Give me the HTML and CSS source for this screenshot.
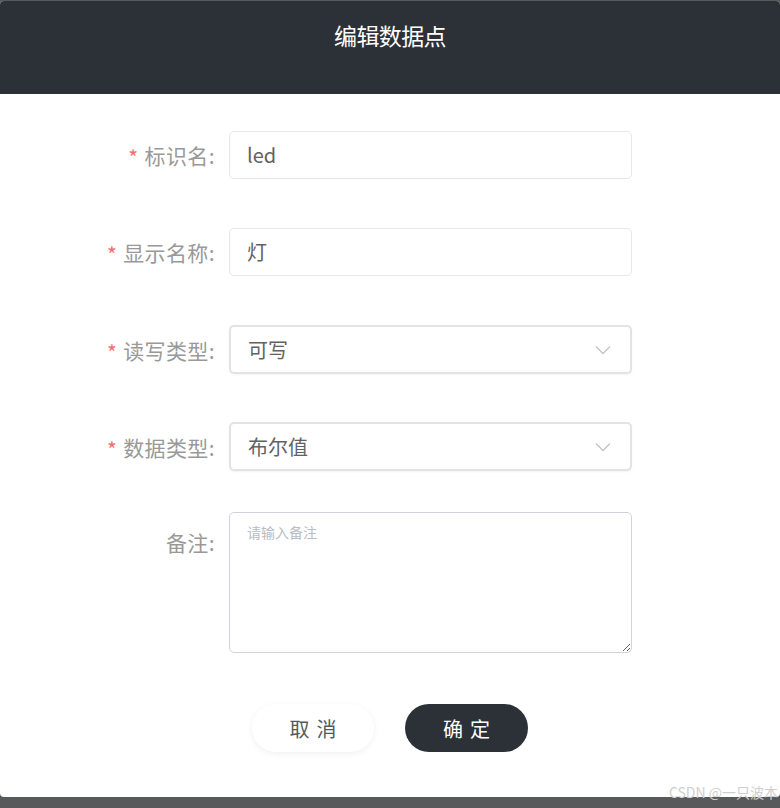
FILE: index.html
```html
<!DOCTYPE html>
<html lang="zh">
<head>
<meta charset="utf-8">
<title>编辑数据点</title>
<link rel="stylesheet" href="styles.css">
</head>
<body>
<div class="dialog">
  <div class="dialog-header">
    <h1 class="dialog-title">编辑数据点</h1>
  </div>
  <form class="form">
    <div class="form-row">
      <label class="form-label"><span class="req">*</span>标识名:</label>
      <div class="field input">led</div>
    </div>
    <div class="form-row">
      <label class="form-label"><span class="req">*</span>显示名称:</label>
      <div class="field input">灯</div>
    </div>
    <div class="form-row form-row-select">
      <label class="form-label"><span class="req">*</span>读写类型:</label>
      <div class="field select">可写
        <svg class="chev" width="16" height="10" viewBox="0 0 16 10"><path d="M1 1.5 L8 8.5 L15 1.5" fill="none" stroke="#c0c4cc" stroke-width="1.3"/></svg>
      </div>
    </div>
    <div class="form-row form-row-select">
      <label class="form-label"><span class="req">*</span>数据类型:</label>
      <div class="field select">布尔值
        <svg class="chev" width="16" height="10" viewBox="0 0 16 10"><path d="M1 1.5 L8 8.5 L15 1.5" fill="none" stroke="#c0c4cc" stroke-width="1.3"/></svg>
      </div>
    </div>
    <div class="form-row form-row-top">
      <label class="form-label label-top">备注:</label>
      <textarea class="field textarea" placeholder="请输入备注"></textarea>
    </div>
    <div class="actions">
      <button type="button" class="btn btn-cancel">取消</button>
      <button type="button" class="btn btn-ok">确定</button>
    </div>
  </form>
</div>
<div class="watermark">CSDN @一只波本</div>
</body>
</html>
```

FILE: styles.css
```css
html, body {
  margin: 0;
  padding: 0;
}
body {
  width: 780px;
  height: 808px;
  background: #58595b;
  font-family: "Noto Sans CJK SC", "Noto Sans", "Liberation Sans", sans-serif;
  overflow: hidden;
  position: relative;
}
.dialog {
  margin-top: 1px;
  height: 796px;
  background: #ffffff;
  border-radius: 4px;
  overflow: hidden;
}
.dialog-header {
  height: 93px;
  background: #2c3138;
  padding-top: 18px;
  box-sizing: border-box;
}
.dialog-title {
  margin: 0;
  text-align: center;
  color: #ffffff;
  font-size: 23px;
  line-height: 32px;
  font-weight: 400;
  letter-spacing: -0.6px;
}
.form {
  padding-top: 37px;
  display: flex;
  flex-direction: column;
}
.form-row {
  display: flex;
  align-items: center;
  margin-bottom: 49px;
}
.form-row-select {
  margin-bottom: 48px;
}
.form-row-top {
  align-items: flex-start;
  margin-top: -7px;
  margin-bottom: 51px;
}
.form-label {
  width: 217px;
  box-sizing: border-box;
  padding-right: 2px;
  text-align: right;
  font-size: 21px;
  line-height: 48px;
  color: #999999;
  letter-spacing: 0.4px;
}
.label-top {
  margin-top: 6px;
}
.req {
  color: #f56c6c;
  font-size: 21px;
  margin-right: 6px;
  position: relative;
  top: 2px;
}
.field {
  margin-left: 12px;
  width: 403px;
  box-sizing: border-box;
  border-radius: 5px;
  color: #606266;
  font-family: inherit;
}
.input {
  height: 48px;
  border: 1px solid #e4e7ed;
  padding-left: 17px;
  font-size: 20px;
  line-height: 46px;
}
.select {
  height: 49px;
  border: 2px solid #e3e3e3;
  padding-left: 17px;
  font-size: 20px;
  line-height: 45px;
  display: flex;
  align-items: center;
  justify-content: space-between;
  padding-right: 19px;
  box-shadow: 0 1px 2px rgba(0,0,0,0.05);
}
.chev {
  display: block;
}
.textarea {
  height: 141px;
  border: 1px solid #d0d3d9;
  padding: 9px 17px;
  font-size: 14px;
  line-height: 20px;
  resize: vertical;
  outline: none;
  display: block;
}
.textarea::placeholder {
  color: #b8bcc4;
}
.actions {
  display: flex;
  justify-content: center;
  gap: 31px;
}
.btn {
  width: 122px;
  height: 48px;
  border-radius: 24px;
  border: none;
  font-family: inherit;
  font-size: 20px;
  letter-spacing: 7px;
  text-indent: 7px;
  cursor: pointer;
}
.btn-cancel {
  background: #ffffff;
  color: #555a60;
  box-shadow: 0 2px 6px rgba(0,0,0,0.06);
}
.btn-ok {
  background: #2c3138;
  color: #ffffff;
  width: 123px;
}
.watermark {
  position: absolute;
  right: 2px;
  bottom: 8px;
  font-size: 14px;
  line-height: 16px;
  color: #cfcfcf;
  font-family: "Noto Sans CJK SC", "Liberation Sans", sans-serif;
}
```
